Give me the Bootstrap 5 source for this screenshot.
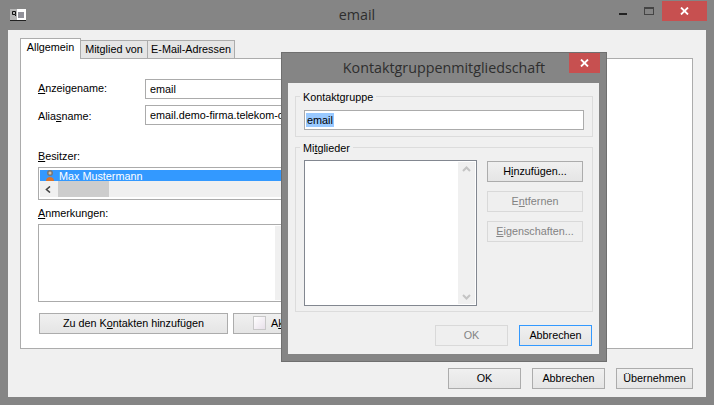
<!DOCTYPE html>
<html lang="de">
<head>
<meta charset="utf-8">
<title>email</title>
<link href="https://cdn.jsdelivr.net/npm/bootstrap@5.3.0/dist/css/bootstrap.min.css" rel="stylesheet">
<style>
html,body{height:405px;overflow:hidden}
body{font-family:"Liberation Sans",sans-serif;font-size:10.8px;line-height:15px;color:#000;background:#858585}
u{text-underline-offset:1px;text-decoration-thickness:1px}
.win-shell{width:714px;height:405px;padding:0 8px 8px;position:relative}
.win-bar{height:30px;position:relative}
.win-ttl{font-family:"Open Sans",sans-serif;font-size:14.3px;color:#2e2e2e;line-height:30px}
.win-ico{position:absolute;left:2px;top:9px}
.win-ctl{position:absolute;right:-1px;top:1px;height:20px}
.win-x{width:45px;height:20px;background:#c75050}
.win-max{width:26px;height:20px}
.win-min{width:27px;height:20px;padding-bottom:6px}
.win-body{height:367px;background:#f0f0f0;padding:8px 13px 0 12px}
.tab-strip{height:20px}
.tab-i{border:1px solid #acacac;border-bottom:0;background:#e5e5e5;height:18px;line-height:17px;margin-top:2px;position:relative;text-align:center;white-space:nowrap}
.tab-on{background:#fff;height:21px;margin-top:0;line-height:17px;z-index:2;width:61px;margin-bottom:-1px}
.tab-m{width:67px;border-left:0}
.tab-e{border-left:1px solid #acacac;margin-left:-1px;width:88px}
.tab-pane-box{height:291px;background:#fff;border:1px solid #acacac;padding:20px 17px 0}
.ro-row{height:20px}
.ro-row2{margin-top:6px}
.ro-lab{width:107px;padding-top:2px}
.ro-row2 .ro-lab{padding-top:4px}
.ro-inp{width:150px;border:1px solid #ababab;height:20px;padding:0 4px;line-height:18px;background:#fff;white-space:nowrap}
.owner-lab{margin-top:24px;height:18px;line-height:15px}
.owner-box{width:256px;height:33px;border:1px solid #ababab;padding:2px 1px 0;background:#fff}
.owner-sel{height:11px;background:#39f;color:#fff;line-height:12px;padding-left:19px;position:relative;white-space:nowrap}
.owner-ico{position:absolute;left:5px;top:0}
.hscroll{height:16px;background:#f0f0f0;position:relative}
.hthumb{position:absolute;left:18px;top:0;width:51px;height:16px;background:#cdcdcd}
.note-lab{margin-top:6px;height:18px;line-height:15px}
.note-box{width:256px;height:78px;border:1px solid #ababab;padding:1px;background:#fff}
.note-bar{width:17px;margin-left:auto;height:100%;background:#f0f0f0}
.w-btn{--bs-btn-padding-x:0;--bs-btn-padding-y:1px;--bs-btn-font-size:10.8px;--bs-btn-line-height:15px;--bs-btn-border-radius:0;--bs-btn-color:#000;--bs-btn-border-color:#acacac;--bs-btn-hover-color:#000;--bs-btn-hover-border-color:#acacac;--bs-btn-disabled-color:#838383;--bs-btn-disabled-border-color:#d9d9d9;--bs-btn-disabled-opacity:1;background:linear-gradient(#f0f0f0,#e5e5e5);height:21px;white-space:nowrap}
.w-btn:disabled{background:#efefef}
.w-btn.w-btn-f{border-color:#3399ff}
.b-add{width:189px}
.b-sec{width:189px;text-align:left;padding-left:19px}
.act-row{margin-top:11px;padding-left:1px;gap:5px}
.chk{display:inline-block;width:13px;height:14px;border:1px solid #c8c8c8;background:linear-gradient(135deg,#fff,#e8e0ea);vertical-align:-3px;margin-right:5px}
.foot-row{margin-top:19px;gap:11px}
.b-foot{width:73px}
.b-last{width:77px}
.dlg{position:absolute;left:281px;top:52px;width:326px;height:310px;background:#858585;border:1px solid #6f6f6f;padding:30px 7px 7px 6px;z-index:5}
.dlg-ttl{position:absolute;left:0;right:0;top:5px;font-family:"Open Sans",sans-serif;font-size:14.3px;line-height:20px;color:#2e2e2e}
.dlg-x{position:absolute;right:6px;top:0;width:31px;height:20px;background:#c75050}
.dlg-body{height:271px;background:#f0f0f0;padding:13px 6px 0 7px;position:relative}
.grp{border:1px solid #dcdcdc;position:relative}
.grp-lab{position:absolute;left:4px;top:-7px;background:#f0f0f0;padding:0 3px;line-height:15px}
.grp-a{height:41px;padding:13px 8px 0}
.grp-b{height:165px;margin-top:10px;padding:12px 9px 0 8px}
.name-inp{height:20px;border:1px solid #ababab;background:#fff;padding:0 1px;line-height:18px}
.name-sel{background:#99c9ff;display:inline-block;height:14px;line-height:14px;padding:0 1px}
.mem-box{width:173px;height:146px;border:1px solid #828790;background:#fff;padding:1px}
.vbar{width:17px;height:100%;margin-left:auto;background:#f0f0f0}
.mem-btns{width:96px;margin-left:10px;padding-top:1px;gap:9px}
.dlg-foot{margin-top:13px;gap:11px;padding-right:1px}
</style>
</head>
<body>
<div class="win-shell">
  <div class="win-bar text-center">
    <svg class="win-ico" width="16" height="12" viewBox="0 0 16 12"><rect width="16" height="12" fill="#fff"/><rect width="7" height="11" fill="#b5b5b5"/><rect y="11" width="16" height="1" fill="#222"/><path d="M2.500 2.500h3v3h-3zM5 6l1 1" fill="none" stroke="#111"/><path d="M8 4h6M8 6h6M8 8h6" stroke="#223" stroke-width="1"/></svg>
    <div class="win-ttl">email</div>
    <div class="win-ctl d-flex">
      <div class="win-min d-flex align-items-end justify-content-center"><svg class="d-block" width="8" height="2"><rect width="8" height="2" fill="#222"/></svg></div>
      <div class="win-max d-flex align-items-center justify-content-center"><svg width="10" height="8" viewBox="0 0 10 8"><rect x=".5" y=".5" width="9" height="7" fill="none" stroke="#444"/><rect width="10" height="2" fill="#444"/></svg></div>
      <div class="win-x d-flex align-items-center justify-content-center"><svg width="9" height="8" viewBox="0 0 9 8"><path d="M1 .5l7 7M8 .5l-7 7" stroke="#fff" stroke-width="1.800"/></svg></div>
    </div>
  </div>
  <div class="win-body">
    <div class="tab-strip d-flex">
      <div class="tab-i tab-on">Allgemein</div>
      <div class="tab-i tab-m">Mitglied von</div>
      <div class="tab-i tab-e">E-Mail-Adressen</div>
    </div>
    <div class="tab-pane-box">
      <div class="ro-row d-flex"><div class="ro-lab"><u>A</u>nzeigename:</div><div class="ro-inp">email</div></div>
      <div class="ro-row ro-row2 d-flex"><div class="ro-lab">Alia<u>s</u>name:</div><div class="ro-inp">email.demo-firma.telekom-o</div></div>
      <div class="owner-lab"><u>B</u>esitzer:</div>
      <div class="owner-box">
        <div class="owner-sel">
          <svg class="owner-ico" width="10" height="11" viewBox="0 0 10 11"><circle cx="5" cy="3" r="3" fill="#777"/><circle cx="5" cy="3" r="1.500" fill="#d8c0a0"/><path d="M1 11c0-3 2-4 4-4s4 1 4 4z" fill="#d9742c"/></svg>Max Mustermann
        </div>
        <div class="hscroll"><svg class="position-absolute" style="left:5px;top:5px" width="6" height="7" viewBox="0 0 6 7"><path d="M5 .5l-3.500 3 3.500 3" fill="none" stroke="#444" stroke-width="1.600"/></svg><div class="hthumb"></div></div>
      </div>
      <div class="note-lab"><u>A</u>nmerkungen:</div>
      <div class="note-box"><div class="note-bar"></div></div>
      <div class="act-row d-flex">
        <button class="btn w-btn b-add" type="button">Zu den K<u>o</u>ntakten hinzufügen</button>
        <button class="btn w-btn b-sec" type="button"><span class="chk"></span>A<u>k</u></button>
      </div>
    </div>
    <div class="foot-row d-flex justify-content-end">
      <button class="btn w-btn b-foot" type="button">OK</button>
      <button class="btn w-btn b-foot" type="button">Abbrechen</button>
      <button class="btn w-btn b-last" type="button">Übernehmen</button>
    </div>
  </div>
</div>

<div class="dlg">
  <div class="dlg-ttl text-center">Kontaktgruppenmitgliedschaft</div>
  <div class="dlg-x d-flex align-items-center justify-content-center"><svg width="9" height="8" viewBox="0 0 9 8"><path d="M1 .5l7 7M8 .5l-7 7" stroke="#fff" stroke-width="1.800"/></svg></div>
  <div class="dlg-body">
    <div class="grp grp-a">
      <div class="grp-lab">Kontaktgruppe</div>
      <div class="name-inp"><span class="name-sel">email</span></div>
    </div>
    <div class="grp grp-b d-flex">
      <div class="grp-lab">Mi<u>t</u>glieder</div>
      <div class="mem-box"><div class="vbar d-flex flex-column justify-content-between align-items-center py-1">
        <svg width="9" height="6" viewBox="0 0 9 6"><path d="M1 5l3.500-3.500L8 5" fill="none" stroke="#c4c4c4" stroke-width="2"/></svg>
        <svg width="9" height="6" viewBox="0 0 9 6"><path d="M1 1l3.500 3.500L8 1" fill="none" stroke="#c4c4c4" stroke-width="2"/></svg>
      </div></div>
      <div class="mem-btns d-flex flex-column">
        <button class="btn w-btn" type="button">H<u>i</u>nzufügen...</button>
        <button class="btn w-btn" type="button" disabled>E<u>n</u>tfernen</button>
        <button class="btn w-btn" type="button" disabled><u>E</u>igenschaften...</button>
      </div>
    </div>
    <div class="dlg-foot d-flex justify-content-end">
      <button class="btn w-btn b-foot" type="button" disabled>OK</button>
      <button class="btn w-btn b-foot w-btn-f" type="button">Abbrechen</button>
    </div>
  </div>
</div>
<script src="https://cdn.jsdelivr.net/npm/bootstrap@5.3.0/dist/js/bootstrap.bundle.min.js"></script>
</body>
</html>
